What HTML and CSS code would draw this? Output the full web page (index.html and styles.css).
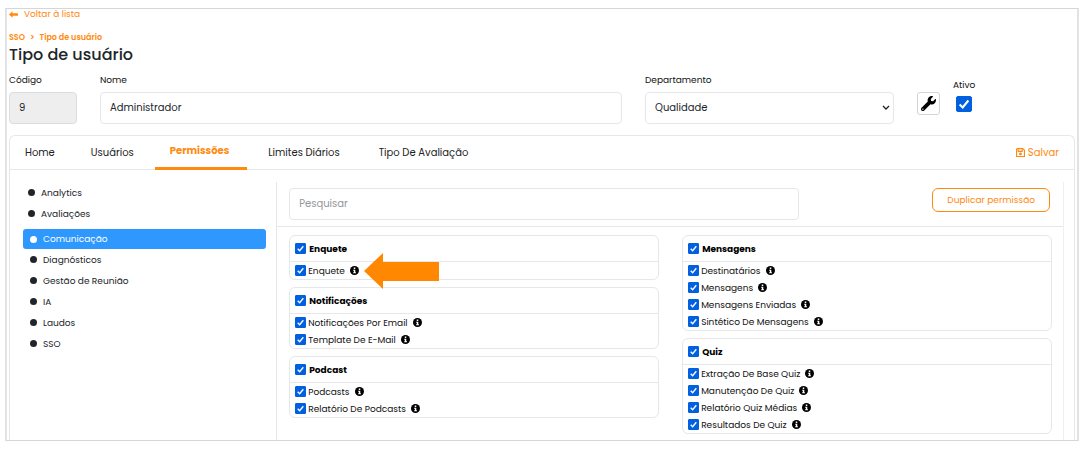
FILE: index.html
```html
<!DOCTYPE html>
<html lang="pt-BR">
<head>
<meta charset="utf-8">
<meta name="viewport" content="width=device-width, initial-scale=1">
<title>Tipo de usuário</title>
<link rel="stylesheet" href="styles.css">
</head>
<body>
<svg class="defs" aria-hidden="true">
  <symbol id="info" viewBox="0 0 16 16">
    <circle cx="8" cy="8" r="8" fill="#000"/>
    <path d="M6.7 2.7h2.7v2.5H6.7zM5.7 6.5h3.7v4.4h1.1v2H5.7v-2h1.1V8.4H5.7z" fill="#fff"/>
  </symbol>
</svg>
<div class="frame">
  <header class="top">
    <a class="back" href="#"><svg class="back-icon" viewBox="0 0 18 14" aria-hidden="true"><path d="M0 7l7-6.500v4H17q1 0 1 1v3q0 1-1 1H7v4z" fill="currentColor"/></svg>Voltar à lista</a>
    <nav class="crumbs" aria-label="Trilha"><a href="#">SSO</a><span>&gt;</span><a href="#">Tipo de usuário</a></nav>
    <h1>Tipo de usuário</h1>
  </header>

  <form class="form">
    <div class="field"><label for="codigo">Código</label><input class="control" id="codigo" type="text" value="9" disabled></div>
    <div class="field"><label for="nome">Nome</label><input class="control" id="nome" type="text" value="Administrador"></div>
    <div class="field"><label for="dep">Departamento</label><select class="control select" id="dep"><option>Qualidade</option></select></div>
    <div class="actions">
      <button class="tool" type="button" aria-label="Configurar"><svg viewBox="0 0 512 512" aria-hidden="true"><path d="M507.700 109.100c-2.200-9-13.500-12.100-20.100-5.500l-74.400 74.400-67.900-11.300L334 98.900l74.400-74.400c6.600-6.600 3.400-17.900-5.700-20.200-47.400-11.700-99.600.9-136.600 37.900-39.600 39.600-50.500 97.100-34.100 147.200L18.700 402.800c-25 25-25 65.500 0 90.500s65.500 25 90.500 0l213.200-213.200c50.100 16.700 107.500 5.700 147.400-34.200 37.100-37.100 49.700-89.300 37.900-136.800zM64 472c-13.200 0-24-10.800-24-24 0-13.300 10.700-24 24-24s24 10.700 24 24c0 13.200-10.700 24-24 24z"/></svg></button>
      <div class="active-field"><label for="ativo">Ativo</label><input class="check check-lg" id="ativo" type="checkbox" checked></div>
    </div>
  </form>

  <section class="panel">
    <div class="tabbar">
      <nav class="tabs"><a href="#">Home</a><a href="#">Usuários</a><a class="current" href="#" aria-current="page">Permissões</a><a href="#">Limites Diários</a><a href="#">Tipo De Avaliação</a></nav>
      <button class="save" type="button"><svg viewBox="0 0 16 16" fill="none" stroke="currentColor" stroke-width="2" aria-hidden="true"><path d="M2 1h10l3 3v11H1V2z"/><path d="M4 2v4h7V2"/><circle cx="8" cy="10.500" r="1.500" fill="currentColor"/></svg>Salvar</button>
    </div>
    <div class="content">
      <ul class="modules">
        <li><a class="outer" href="#">Analytics</a></li>
        <li><a class="outer" href="#">Avaliações</a></li>
        <li><a class="selected" href="#">Comunicação</a></li>
        <li><a href="#">Diagnósticos</a></li>
        <li><a href="#">Gestão de Reunião</a></li>
        <li><a href="#">IA</a></li>
        <li><a href="#">Laudos</a></li>
        <li><a href="#">SSO</a></li>
      </ul>
      <div class="main">
        <div class="toolbar">
          <input class="control search" type="search" placeholder="Pesquisar" aria-label="Pesquisar">
          <button class="duplicate" type="button">Duplicar permissão</button>
        </div>
        <div class="cards">
          <div class="column">
            <section class="card">
              <label class="card-head"><input class="check" type="checkbox" checked>Enquete</label>
              <div class="row"><label><input class="check" type="checkbox" checked>Enquete</label><svg class="info"><use href="#info"/></svg><svg class="pointer" viewBox="0 0 75 36" aria-hidden="true"><path d="M0 18L19 0v9h56v19H19v8z" fill="#ff8800"/></svg></div>
            </section>
            <section class="card">
              <label class="card-head"><input class="check" type="checkbox" checked>Notificações</label>
              <div class="row"><label><input class="check" type="checkbox" checked>Notificações Por Email</label><svg class="info"><use href="#info"/></svg></div>
              <div class="row"><label><input class="check" type="checkbox" checked>Template De E-Mail</label><svg class="info"><use href="#info"/></svg></div>
            </section>
            <section class="card">
              <label class="card-head"><input class="check" type="checkbox" checked>Podcast</label>
              <div class="row"><label><input class="check" type="checkbox" checked>Podcasts</label><svg class="info"><use href="#info"/></svg></div>
              <div class="row"><label><input class="check" type="checkbox" checked>Relatório De Podcasts</label><svg class="info"><use href="#info"/></svg></div>
            </section>
          </div>
          <div class="column">
            <section class="card">
              <label class="card-head"><input class="check" type="checkbox" checked>Mensagens</label>
              <div class="row"><label><input class="check" type="checkbox" checked>Destinatários</label><svg class="info"><use href="#info"/></svg></div>
              <div class="row"><label><input class="check" type="checkbox" checked>Mensagens</label><svg class="info"><use href="#info"/></svg></div>
              <div class="row"><label><input class="check" type="checkbox" checked>Mensagens Enviadas</label><svg class="info"><use href="#info"/></svg></div>
              <div class="row"><label><input class="check" type="checkbox" checked>Sintético De Mensagens</label><svg class="info"><use href="#info"/></svg></div>
            </section>
            <section class="card">
              <label class="card-head"><input class="check" type="checkbox" checked>Quiz</label>
              <div class="row"><label><input class="check" type="checkbox" checked>Extração De Base Quiz</label><svg class="info"><use href="#info"/></svg></div>
              <div class="row"><label><input class="check" type="checkbox" checked>Manutenção De Quiz</label><svg class="info"><use href="#info"/></svg></div>
              <div class="row"><label><input class="check" type="checkbox" checked>Relatório Quiz Médias</label><svg class="info"><use href="#info"/></svg></div>
              <div class="row"><label><input class="check" type="checkbox" checked>Resultados De Quiz</label><svg class="info"><use href="#info"/></svg></div>
            </section>
          </div>
        </div>
      </div>
    </div>
  </section>
</div>
</body>
</html>
```
FILE: styles.css
```css
:root {
  --orange: #ff8a0f;
  --line: #e6e7e9;
  --ink: #212529;
}
* { box-sizing: border-box; }
body {
  margin: 0;
  padding: 8px 7px 10px 5px;
  min-height: 100vh;
  display: flex;
  flex-direction: column;
  background: #fff;
  color: var(--ink);
  font: 9px/16px Poppins, Inter, sans-serif;
}
a { color: inherit; text-decoration: none; }
input, select, button { font: inherit; color: inherit; margin: 0; }
.defs { display: none; }
.frame {
  flex: 1;
  display: flex;
  flex-direction: column;
  padding: 0 2px;
  border: 1px solid #d6d6d8;
  border-left: 2px solid #e2e2e4;
  border-right: 2px solid #e2e2e4;
}

.top { display: flex; flex-direction: column; align-items: flex-start; }
.back { display: flex; align-items: center; gap: 6px; line-height: 11px; color: var(--orange); }
.back-icon { width: 9px; height: 7px; }
.crumbs { display: flex; gap: 5px; margin-top: 12px; font-size: 8px; line-height: 12px; font-weight: 600; color: var(--orange); }
h1 { margin: 0; font-size: 16px; line-height: 22px; font-weight: 500; }

.form {
  display: grid;
  grid-template-columns: 68px 522fr 249fr 158fr;
  gap: 23px;
  margin-top: 6px;
}
.field { display: flex; flex-direction: column; gap: 4px; min-width: 0; color: #111; }
.control {
  width: 100%;
  height: 32px;
  padding: 0 9px;
  border: 1px solid var(--line);
  border-radius: 4px;
  background: #fff;
  color: var(--ink);
  font-size: 10px;
  outline: 0;
}
.control:disabled { background: #eee; border-color: #dcdddf; }
.select {
  appearance: none;
  background: #fff url("data:image/svg+xml,%3Csvg xmlns='http://www.w3.org/2000/svg' viewBox='0 0 8 6'%3E%3Cpath d='M1 1l3 3 3-3' fill='none' stroke='%23222' stroke-width='1.300'/%3E%3C/svg%3E") no-repeat right 3px center / 8px 6px;
}
.actions { display: flex; align-items: flex-start; gap: 13px; padding-top: 5px; }
.tool {
  display: grid;
  place-items: center;
  width: 23px;
  height: 23px;
  margin-top: 15px;
  padding: 0;
  border: 1px solid #d4d4d6;
  border-radius: 3px;
  background: #fff;
}
.tool svg { width: 15px; height: 15px; }
.active-field { display: flex; flex-direction: column; align-items: center; gap: 3px; color: #111; }

.check {
  appearance: none;
  flex: none;
  width: 11px;
  height: 11px;
  border-radius: 1px;
  border: 1px solid #0060df;
}
.check:checked {
  background: #0060df url("data:image/svg+xml,%3Csvg xmlns='http://www.w3.org/2000/svg' viewBox='0 0 16 16'%3E%3Cpath d='M3 8.500l3.500 3.500L13 4' fill='none' stroke='%23fff' stroke-width='2.400'/%3E%3C/svg%3E") no-repeat center / 100%;
}
.check-lg { width: 16px; height: 16px; border-radius: 2px; }

.panel {
  flex: 1;
  display: flex;
  flex-direction: column;
  margin-top: 11px;
  border: 1px solid var(--line);
  border-bottom: 0;
  border-radius: 6px 6px 0 0;
}
.tabbar { display: flex; justify-content: space-between; border-bottom: 1px solid var(--line); }
.tabs { display: flex; gap: 6px; font-size: 10px; line-height: 33px; color: #222; }
.tabs a { padding: 0 15px; }
.tabs a:nth-child(n+3) { padding-right: 18px; }
.tabs .current { color: var(--orange); font-weight: 700; line-height: 30px; border-bottom: 3px solid var(--orange); margin-bottom: -1px; }
.save {
  display: flex;
  align-items: center;
  gap: 3px;
  padding: 0 15px;
  border: 0;
  background: none;
  color: var(--orange);
  font-size: 10px;
}
.save svg { width: 9px; height: 9px; }

.content { flex: 1; display: grid; grid-template-columns: 266fr 787fr; padding: 12px 10px 0 0; }
.modules { list-style: none; margin: 0; padding: 0 10px 0 13px; }
.modules a { display: flex; align-items: center; gap: 6px; height: 21px; padding-left: 7px; border-radius: 3px; }
.modules a.outer { padding-left: 5px; }
.modules a::before { content: ""; width: 7px; height: 7px; border-radius: 50%; background: currentColor; }
.modules .selected { height: 20px; margin: 5px 0 0; background: #2e98ff; color: #fff; }

.main { border-left: 1px solid var(--line); border-right: 1px solid #f0f0f2; }
.toolbar {
  display: flex;
  justify-content: space-between;
  align-items: flex-start;
  padding: 6px 13px 6px 12px;
  border-bottom: 1px solid var(--line);
}
.search { width: 67%; }
.search::placeholder { color: #939699; opacity: 1; }
.duplicate {
  height: 24px;
  padding: 0 14px;
  border: 1px solid var(--orange);
  border-radius: 6px;
  background: #fff;
  color: var(--orange);
}

.cards { display: grid; grid-template-columns: 1fr 1fr; gap: 23px; padding: 8px 11px 6px 12px; color: #111; }
.column { display: flex; flex-direction: column; gap: 7px; }
.card { border: 1px solid var(--line); border-radius: 6px; }
.card-head { display: flex; align-items: center; gap: 3px; height: 26px; padding-left: 5px; border-bottom: 1px solid var(--line); font-weight: 700; color: #000; }
.row { display: flex; align-items: center; gap: 5px; height: 17px; padding-left: 5px; }
.row label { display: flex; align-items: center; gap: 2px; }
.info { flex: none; width: 9px; height: 9px; }
.pointer { width: 75px; height: 36px; position: relative; flex: none; }
```
